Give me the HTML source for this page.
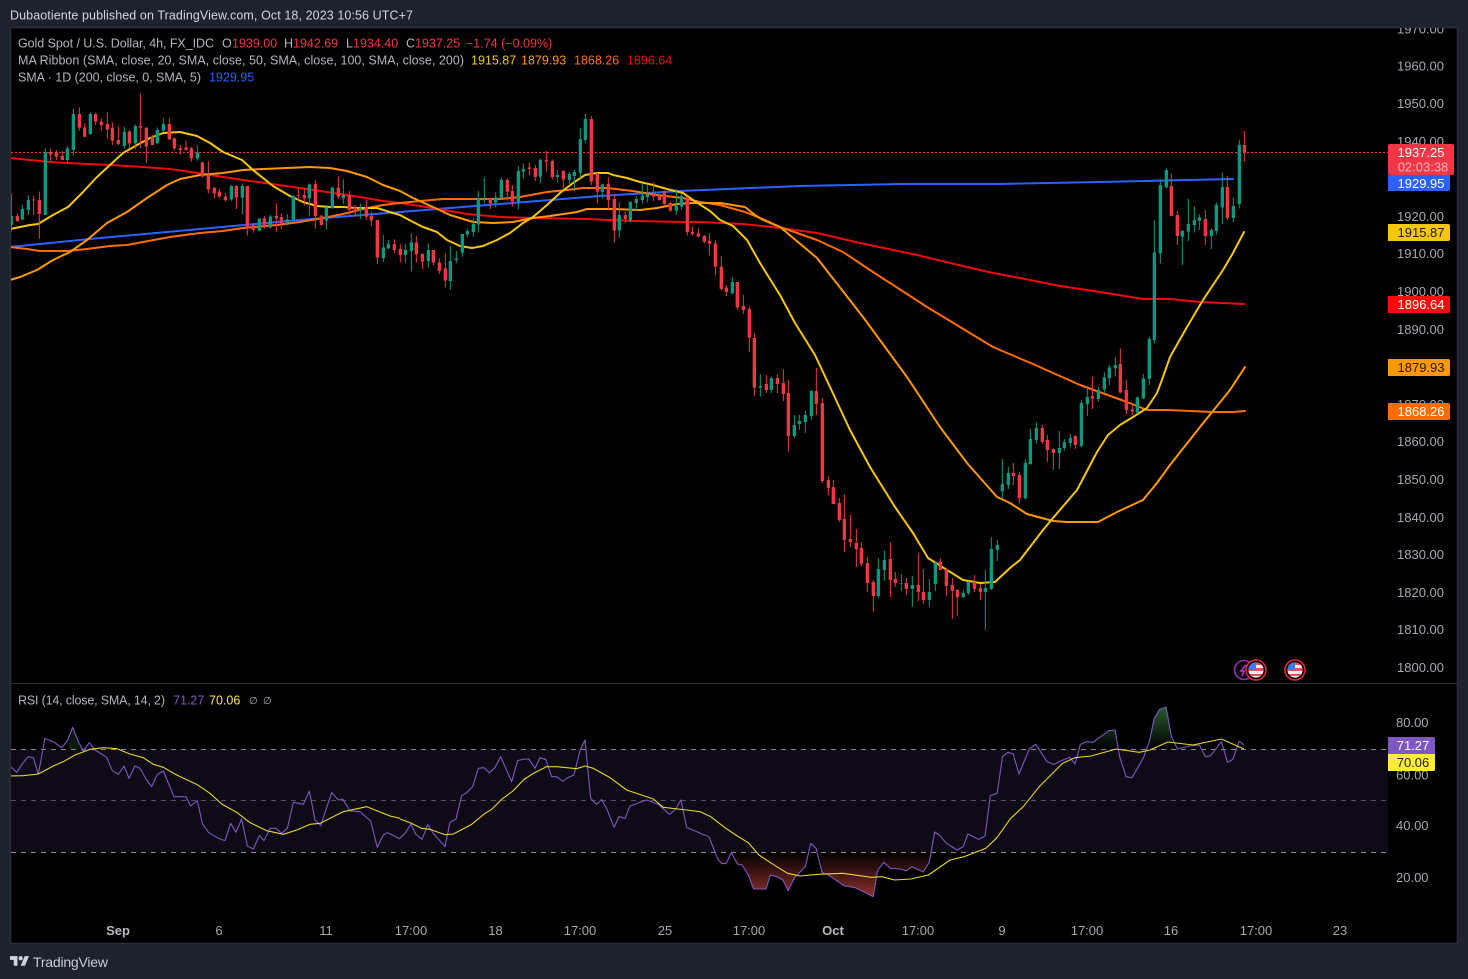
<!DOCTYPE html>
<html><head><meta charset="utf-8"><title>Gold Spot / U.S. Dollar</title>
<style>
html,body{margin:0;padding:0;background:#1e222d;width:1468px;height:979px;overflow:hidden}
svg{display:block;font-family:"Liberation Sans",sans-serif}
path{vector-effect:non-scaling-stroke;fill:none}
.gw{stroke:#089981;stroke-width:1}.gb{stroke:#089981;stroke-width:3.3}
.rw{stroke:#f23645;stroke-width:1}.rb{stroke:#f23645;stroke-width:3.3}
.ma{stroke-width:2;stroke-linejoin:round;stroke-linecap:round}
.ax{font-size:13px;fill:#a6a9b1}
.lg{font-size:12.5px;fill:#b2b5be}
.tag{font-size:13px;text-anchor:middle}
.tm{font-size:13px;fill:#a6a9b1;text-anchor:middle}
</style></head><body>
<svg width="1468" height="979" viewBox="0 0 1468 979" xmlns="http://www.w3.org/2000/svg">
<defs>
<linearGradient id="rg" x1="0" y1="0" x2="0" y2="1"><stop offset="0" stop-color="#8a2e2a" stop-opacity="0"/><stop offset="1" stop-color="#8f302b"/></linearGradient>
<linearGradient id="gg" gradientUnits="userSpaceOnUse" x1="0" y1="148" x2="0" y2="21"><stop offset="0" stop-color="#2a5a30" stop-opacity="0"/><stop offset="1" stop-color="#2a5a30"/></linearGradient>
<clipPath id="c1"><circle cx="1256" cy="670" r="7.6"/></clipPath>
<clipPath id="c2"><circle cx="1295" cy="670" r="7.6"/></clipPath>
<clipPath id="ch"><rect x="11" y="28" width="1445" height="915"/></clipPath>
</defs>
<rect width="1468" height="979" fill="#1e222d"/>
<rect x="10.5" y="27.5" width="1447" height="916" fill="#000" stroke="#2a2e39" stroke-width="1.5"/>
<path d="M11 683.5H1457" style="stroke:#2a2e39;stroke-width:1"/>
<!-- RSI band -->
<rect x="11" y="749" width="1377" height="103" fill="#0e0b16"/>
<path d="M11 749.5H1388M11 852.5H1388" style="stroke:#8b8794;stroke-width:1;stroke-dasharray:5 5"/>
<path d="M11 800.5H1388" style="stroke:#55525d;stroke-width:1;stroke-dasharray:5 5"/>
<!-- last price line -->
<path d="M11 152.5H1388" style="stroke:#ff3344;stroke-width:1;stroke-dasharray:2 2"/>
<g clip-path="url(#ch)">
<!-- MAs -->
<path class="ma" style="stroke:#2962ff" d="M10 247L100 238L200 229L300 220L400 212L500 204L600 196L680 191L800 186L900 184L1000 184L1100 182L1233 179"/>
<path class="ma" style="stroke:#f10a0a" d="M10 158L30 160L50 162L67 163L110 165L143 167L170 169L197 173L243 180L293 187L327 192L360 197L383 201L400 203L433 208L467 214L500 217L533 218L587 219L633 221L683 222L700 222L743 224L780 228L817 233L860 243L917 255L967 267L993 273L1020 278L1060 286L1100 292L1143 299L1170 299L1200 302L1244 304"/>
<path class="ma" style="stroke:#ff6d00" d="M10 247L27 249L40 251L67 251L87 249L110 246L127 245L143 242L170 237L200 233L223 231L243 228L277 225L300 222L323 218L343 214L363 209L383 205L400 203L420 201L443 199L477 199L500 199L520 197L547 192L567 190L583 188L607 188L633 191L657 195L683 198L700 202L720 205L745 212L765 220L780 227L817 240L843 252L873 272L927 307L993 347L1000 350L1033 364L1080 385L1127 402L1147 410L1167 410L1213 412L1233 412L1245 411"/>
<path class="ma" style="stroke:#ff9800" d="M10 280L20 277L37 270L53 260L70 252L87 240L107 223L127 212L147 198L167 185L180 179L200 175L223 173L243 170L263 169L287 168L310 167L330 168L347 171L367 177L383 185L400 191L413 198L433 207L450 215L473 222L493 223L513 222L533 218L550 216L577 212L587 209L613 209L640 210L657 208L677 204L693 203L720 203L745 207L755 215L763 220L780 227L817 258L863 317L907 377L940 427L967 463L997 497L1010 503L1027 514L1053 521L1067 522L1098 522L1117 512L1143 500L1157 483L1170 465L1200 427L1230 390L1245 367"/>
<path class="ma" style="stroke:#f5c60a" d="M10 229L20 227L30 225L38 224L53 215L68 207L83 192L97 177L110 165L123 153L137 145L150 138L163 133L180 132L197 136L210 143L223 152L242 160L253 170L273 186L290 196L303 202L317 206L330 207L343 207L357 208L377 208L393 213L400 215L413 222L423 227L437 232L447 240L460 246L472 248L483 246L497 240L510 233L523 223L533 217L547 205L560 193L573 183L585 175L597 173L608 173L613 175L627 178L640 182L653 185L667 189L683 193L693 200L710 211L720 220L733 226L747 240L760 263L780 295L795 323L815 355L830 387L850 430L870 467L895 507L913 533L928 558L947 570L963 580L980 583L995 582L1010 568L1020 560L1043 530L1053 518L1077 490L1097 452L1108 435L1120 425L1133 417L1147 408L1157 393L1163 377L1170 357L1187 327L1203 300L1223 270L1233 253L1244 232"/>
<!-- candles -->
<g transform="translate(10 90) scale(.33333)">
<path class="gw" d="M4 312V425M37 345V390M55 315V375M106 175V375M172 168V215M190 57V197M241 67V135M343 110V175M376 103V178M442 112V160M460 85V125M562 165V212M664 285V332M697 280V372M748 385V425M781 375V415M832 372V405M850 315V390M898 280V380M949 345V418M967 290V355M1000 268V342M1051 340V387M1120 435V516M1135 450V478"/>
<path class="gb" d="M4 378V405M37 357V389M55 330V360M106 187V375M172 175V210M190 72V180M241 72V132M343 125V168M376 108V160M442 120V160M460 102V122M562 187V205M664 288V328M697 288V323M748 385V422M781 380V412M832 388V398M850 318V390M898 283V325M949 353V392M967 293V355M1000 315V325M1051 355V362M1120 472V505M1135 462V475"/>
<path class="rw" d="M22 370V395M71 318V375M88 305V446M122 175V213M139 180V210M157 183V212M208 52V122M224 100V143M257 68V105M274 85V122M292 67V145M307 97V165M325 110V165M358 120V175M391 10V175M409 112V218M427 135V165M478 85V150M493 143V182M511 165V195M528 152V182M544 170V215M577 215V262M595 213V310M613 292V325M628 297V325M646 308V335M679 285V357M712 288V437M730 403V428M763 378V415M799 340V425M814 370V417M865 297V335M883 295V347M916 270V416M934 375V407M985 260V327M1018 303V375M1036 345V380M1069 330V390M1084 365V408M1102 390V522M1153 448V490"/>
<path class="rb" d="M22 378V393M71 329V331M88 330V372M122 186V194M139 187V200M157 198V210M208 72V113M224 113V140M257 72V95M274 95V105M292 102V118M307 113V152M325 150V162M358 125V160M391 108V113M409 113V170M427 140V165M478 102V148M493 145V175M511 175V180M528 172V180M544 175V205M577 217V260M595 255V298M613 293V310M628 305V320M646 320V330M679 288V323M712 288V412M730 405V420M763 385V412M799 378V385M814 381V400M865 315V317M883 315V325M916 282V378M934 377V405M985 293V320M1018 315V360M1036 352V365M1069 350V380M1084 378V392M1102 390V503M1153 462V480"/>
</g>
<g transform="translate(400 100) scale(.33333)">
<path class="gw" d="M16 432V490M34 400V515M85 430V503M151 438V570M169 453V490M187 402V470M202 385V413M220 355V410M235 273V398M253 232V310M287 277V322M304 232V295M355 198V328M370 190V237M421 175V250M472 210V248M508 215V252M523 210V273M541 85V235M556 42V130M607 250V295M658 306V413M691 303V367M709 288V332M727 250V312M742 253V307M829 267V345M844 280V330"/>
<path class="gb" d="M16 450V465M34 427V453M85 450V483M151 483V543M169 475V480M187 402V458M202 393V404M220 372V396M235 295V373M253 295V297M287 292V308M304 240V295M355 213V305M370 207V215M421 180V230M472 225V231M508 222V240M523 216V228M541 117V218M556 57V120M607 253V276M658 345V392M691 306V362M709 297V309M727 287V300M742 282V291M829 317V332M844 288V320"/>
<path class="rw" d="M1 432V487M49 408V488M67 460V507M100 450V495M118 475V522M136 460V563M271 295V327M322 235V302M337 255V320M388 187V227M406 195V243M439 153V215M457 178V238M490 210V267M574 48V255M592 218V310M625 232V332M643 282V428M676 335V368M760 247V303M778 280V302M793 272V315M811 305V335M862 290V407M877 380V407M895 385V412M913 405V430M928 400V467M946 420V527"/>
<path class="rb" d="M1 447V465M49 427V463M67 462V485M100 450V488M118 487V513M136 505V542M271 295V310M322 240V275M337 273V305M388 202V207M406 204V231M439 180V185M457 183V231M490 213V238M574 57V245M592 220V275M625 252V300M643 297V392M676 345V357M760 282V290M778 288V300M793 273V312M811 309V332M862 292V396M877 396V402M895 400V410M913 408V425M928 423V431M946 430V500"/>
</g>
<g transform="translate(700 220) scale(.33333)">
<path class="gw" d="M97 171V222M181 462V530M214 470V519M283 585V654M298 585V630M316 573V639M334 510V600M535 1014V1134M553 990V1083M604 1062V1113M637 1068V1161M688 1077V1161M706 1023V1113M790 1110V1134M805 1083V1125M856 1050V1230M874 951V1110M892 960V1023M907 717V835M925 741V807"/>
<path class="gb" d="M97 186V220M181 498V503M214 474V510M283 615V648M298 603V612M316 585V606M334 513V588M535 1047V1128M553 1020V1050M604 1089V1091M637 1095V1107M688 1116V1140M706 1029V1092M790 1119V1131M805 1086V1119M856 1104V1116M874 987V1107M892 975V990M907 792V814M925 759V795"/>
<path class="rw" d="M64 108V212M79 195V228M112 186V270M130 225V282M148 260V396M163 340V528M199 465V519M232 462V519M250 447V543M265 480V696M349 444V585M367 534V789M385 768V825M400 780V852M418 834V906M433 822V996M451 885V981M469 927V1041M484 966V1038M502 1011V1116M520 1080V1176M571 966V1131M586 1056V1101M619 1074V1125M655 999V1143M670 1047V1152M721 1014V1050M739 1044V1128M757 1074V1197M772 1107V1188M823 1065V1116M841 1092V1140M940 729V795M958 756V850"/>
<path class="rb" d="M64 140V207M79 203V216M112 186V262M130 258V270M148 267V353M163 354V503M199 492V510M232 474V492M250 489V522M265 519V648M349 513V552M367 549V783M385 780V804M400 801V852M418 849V900M433 897V960M451 957V966M469 969V987M484 984V1032M502 1029V1089M520 1086V1128M571 1017V1080M586 1077V1089M619 1089V1107M655 1095V1116M670 1116V1140M721 1026V1050M739 1047V1098M757 1095V1113M772 1110V1131M823 1086V1107M841 1104V1116M940 759V768M958 765V835"/>
</g>
<g transform="translate(1000 330) scale(.33333)">
<path class="gw" d="M76 388V508M91 297V405M109 276V340M178 303V417M193 327V363M211 312V350M244 210V352M262 168V258M295 171V216"/>
<path class="gb" d="M76 399V505M91 327V402M109 294V330M178 354V369M193 336V354M211 324V339M244 219V348M262 201V222M295 180V207"/>
<path class="rw" d="M127 285V342M142 315V396M160 355V420M226 315V357M277 141V237"/>
<path class="rb" d="M127 294V336M142 330V360M160 357V369M226 318V345M277 198V206"/>
</g>
<g transform="translate(1100 120) scale(.33333)">
<path class="gw" d="M13 757V820M28 735V795M46 712V770M112 830V880M130 762V838M148 650V795M163 300V670M181 178V430M199 145V205M247 330V435M265 237V363M283 258V338M298 283V330M334 325V387M349 247V345M367 158V312M400 232V308M418 60V265"/>
<path class="gb" d="M13 772V808M28 742V775M46 735V745M112 832V878M130 775V835M148 657V777M163 397V660M181 195V400M199 150V202M247 333V350M265 312V335M283 300V315M298 292V303M334 330V348M349 255V333M367 201V262M400 258V294M418 75V252"/>
<path class="rw" d="M61 685V820M79 780V883M97 855V885M214 162V288M232 273V375M316 270V375M382 168V300M433 33V126"/>
<path class="rb" d="M61 732V817M79 810V870M97 868V875M214 198V288M232 285V348M316 297V348M382 201V294M433 75V98"/>
</g>
<!-- RSI fills -->
<polygon points="68,749 73,727 79,742 83,749" fill="#0a1a0e"/>
<polygon points="580,749 585,740 586,749" fill="#0a1a0e"/>
<g transform="translate(700 700) scale(.35714 .33333)">
<polygon fill="url(#rg)" points="45,457 50,478 60,490 73,491 88,458 105,492 118,495 135,525 150,567 185,567 197,525 215,530 232,540 247,572 265,532 295,500 303,457 335,457 342,518 360,525 405,558 435,563 485,590 497,512 515,487 533,505 560,507 578,512 593,500 625,516 642,487 648,457"/>
<polygon fill="url(#gg)" points="1063,148 1065,133 1083,125 1100,127 1145,92 1162,90 1168,148"/>
<polygon fill="url(#gg)" points="1255,148 1258,125 1272,55 1287,28 1305,21 1320,110 1325,148"/>
</g>
<!-- RSI lines -->
<g transform="translate(0 680) scale(.33333)">
<path style="stroke:#7e57c2;stroke-width:1.1;stroke-linejoin:round" d="M30 258L50 277L68 250L85 230L100 233L115 283L135 175L165 188L185 203L202 183L218 142L235 185L250 213L268 188L285 210L320 232L337 272L355 283L372 258L387 295L405 258L420 265L440 300L455 320L472 283L490 273L522 350L558 350L572 378L592 362L607 430L625 457L655 475L675 482L692 430L708 457L725 417L742 498L760 507L778 467L792 482L810 445L828 445L845 460L862 445L880 367L910 373L928 333L945 420L962 437L995 338L1015 360L1028 357L1050 393L1080 395L1112 423L1132 502L1140 485"/>
<path style="stroke:#e8d52e;stroke-width:1.1;stroke-linejoin:round" d="M30 288L70 287L115 282L160 258L190 245L225 225L270 208L310 203L350 206L390 222L430 233L460 253L490 262L530 285L590 313L630 340L665 372L710 397L750 428L800 452L850 463L890 450L930 433L960 430L1030 395L1100 380L1170 408L1200 415"/>
</g>
<g transform="translate(380 720) scale(.33333)">
<path style="stroke:#7e57c2;stroke-width:1.1;stroke-linejoin:round" d="M0 365L10 345L22 338L40 347L58 356L75 340L93 312L107 342L126 358L143 314L160 340L195 380L210 307L228 297L245 227L260 218L278 200L295 145L312 143L328 158L345 143L362 110L395 185L413 122L428 118L447 117L465 145L480 113L497 118L515 170L530 170L548 184L565 172L582 165L600 92L615 60L632 235L650 253L665 238L682 270L702 322L717 290L735 295L750 258L800 240L835 253L868 283L885 270L903 240L920 323L950 335L960 339"/>
<path style="stroke:#e8d52e;stroke-width:1.1;stroke-linejoin:round" d="M60 297L90 308L125 325L150 328L195 344L220 342L275 313L315 280L335 268L365 238L400 212L430 180L460 160L500 140L530 140L590 146L615 138L640 145L690 173L740 210L790 227L820 237L850 262L920 270L960 275"/>
</g>
<g transform="translate(700 700) scale(.35714 .33333)">
<path style="stroke:#7e57c2;stroke-width:1.1;stroke-linejoin:round" d="M0 400L25 410L50 478L60 490L73 491L88 458L105 492L118 495L135 525L150 567L185 567L197 525L215 530L232 540L247 572L265 532L295 500L310 430L325 445L342 518L360 525L405 558L435 563L485 590L497 512L515 487L533 505L560 507L578 512L593 500L625 516L642 487L657 396L670 405L690 430L720 450L737 440L750 402L780 418L798 408L813 287L832 280L847 170L862 157L877 162L893 222L922 147L940 133L972 185L990 193L1020 178L1035 172L1050 192L1065 133L1083 125L1100 127L1145 92L1162 90L1175 170L1193 230L1210 233L1243 170L1258 125L1272 55L1287 28L1305 21L1320 110L1337 147L1370 138L1398 135L1415 170L1430 167L1460 125L1477 187L1492 178L1510 123L1523 135"/>
<path style="stroke:#e8d52e;stroke-width:1.1;stroke-linejoin:round" d="M0 335L30 350L70 383L100 405L135 428L165 465L200 490L245 520L280 528L330 523L400 520L480 532L510 530L545 540L590 537L640 525L700 480L740 470L800 445L830 415L870 355L905 320L950 260L1015 190L1050 173L1095 168L1165 147L1230 157L1260 150L1310 126L1380 135L1460 117L1523 147"/>
</g>
</g>
<!-- event icons -->
<circle cx="1244" cy="670" r="9.5" fill="#0c0812" stroke="#9c27b0" stroke-width="1.6"/>
<path d="M1246 665L1241 671H1244L1242 676" style="stroke:#c22fd6;stroke-width:1.5"/>
<g>
<circle cx="1256" cy="670" r="10" fill="#000" stroke="#e6263f" stroke-width="1.5"/>
<g clip-path="url(#c1)"><rect x="1248" y="662" width="16" height="16" fill="#f0f0f0"/><rect x="1248" y="662" width="16" height="3" fill="#e8505b"/><rect x="1248" y="668" width="16" height="3" fill="#e8505b"/><rect x="1248" y="674" width="16" height="2" fill="#e8505b"/><rect x="1248" y="662" width="8" height="8" fill="#2f80e4"/></g>
<circle cx="1295" cy="670" r="10" fill="#000" stroke="#e6263f" stroke-width="1.5"/>
<g clip-path="url(#c2)"><rect x="1287" y="662" width="16" height="16" fill="#f0f0f0"/><rect x="1287" y="662" width="16" height="3" fill="#e8505b"/><rect x="1287" y="668" width="16" height="3" fill="#e8505b"/><rect x="1287" y="674" width="16" height="2" fill="#e8505b"/><rect x="1287" y="662" width="8" height="8" fill="#2f80e4"/></g>
</g>
<!-- header -->
<text x="10" y="19.5" font-size="12.5" fill="#d1d4dc" textLength="403" lengthAdjust="spacing">Dubaotiente published on TradingView.com, Oct 18, 2023 10:56 UTC+7</text>
<!-- legend -->
<text class="lg" x="18" y="47.5" textLength="196" lengthAdjust="spacing">Gold Spot / U.S. Dollar, 4h, FX_IDC</text>
<g class="lg"><text class="lg" x="222" y="47.5">O</text><text class="lg" x="284" y="47.5">H</text><text class="lg" x="346" y="47.5">L</text><text class="lg" x="406" y="47.5">C</text></g>
<g font-size="12.5" fill="#f23645"><text x="232" y="47.5">1939.00</text><text x="293" y="47.5">1942.69</text><text x="353" y="47.5">1934.40</text><text x="415" y="47.5">1937.25</text><text x="466" y="47.5">−1.74 (−0.09%)</text></g>
<text class="lg" x="18" y="64.5" textLength="446" lengthAdjust="spacing">MA Ribbon (SMA, close, 20, SMA, close, 50, SMA, close, 100, SMA, close, 200)</text>
<g font-size="12.5"><text x="471" y="64.5" fill="#f5c60a">1915.87</text><text x="521" y="64.5" fill="#ff9800">1879.93</text><text x="574" y="64.5" fill="#ff6d00">1868.26</text><text x="627" y="64.5" fill="#f10a0a">1896.64</text></g>
<text class="lg" x="18" y="81.5" textLength="183" lengthAdjust="spacing">SMA · 1D (200, close, 0, SMA, 5)</text>
<text x="209" y="81.5" font-size="12.5" fill="#2962ff">1929.95</text>
<text class="lg" x="18" y="704.5" textLength="147" lengthAdjust="spacing">RSI (14, close, SMA, 14, 2)</text>
<text x="173" y="704.5" font-size="12.5" fill="#7e57c2">71.27</text>
<text x="209" y="704.5" font-size="12.5" fill="#ffeb3b">70.06</text>
<text x="249" y="704" font-size="10" fill="#b2b5be">∅</text><text x="263" y="704" font-size="10" fill="#b2b5be">∅</text>
<!-- price axis -->
<g class="ax" clip-path="url(#ch)">
<text x="1397" y="33.5">1970.00</text><text x="1397" y="70.5">1960.00</text><text x="1397" y="108">1950.00</text><text x="1397" y="146">1940.00</text><text x="1397" y="221">1920.00</text><text x="1397" y="258">1910.00</text><text x="1397" y="296">1900.00</text><text x="1397" y="334">1890.00</text><text x="1397" y="409">1870.00</text><text x="1397" y="446">1860.00</text><text x="1397" y="484">1850.00</text><text x="1397" y="522">1840.00</text><text x="1397" y="559">1830.00</text><text x="1397" y="597">1820.00</text><text x="1397" y="634">1810.00</text><text x="1397" y="672">1800.00</text>
<text x="1396" y="727">80.00</text><text x="1396" y="779.5">60.00</text><text x="1396" y="830">40.00</text><text x="1396" y="882">20.00</text>
</g>
<!-- tags -->
<rect x="1388" y="144" width="66" height="31" rx="2" fill="#f23645"/>
<path d="M1388 175H1450V189Q1450 191 1448 191H1388Z" style="fill:#2962ff"/>
<path d="M1388 224H1448Q1450 224 1450 226V239Q1450 241 1448 241H1388Z" style="fill:#f5c60a"/>
<path d="M1388 296H1448Q1450 296 1450 298V311Q1450 313 1448 313H1388Z" style="fill:#ff0a0a"/>
<path d="M1388 359H1448Q1450 359 1450 361V374Q1450 376 1448 376H1388Z" style="fill:#ff9800"/>
<path d="M1388 403H1448Q1450 403 1450 405V418Q1450 420 1448 420H1388Z" style="fill:#ff6d00"/>
<path d="M1388 737H1433Q1435 737 1435 739V754H1388Z" style="fill:#7e57c2"/>
<path d="M1388 754H1435V769Q1435 771 1433 771H1388Z" style="fill:#ffeb3b"/>
<g class="tag">
<text class="tag" x="1421" y="157" fill="#fff">1937.25</text>
<text class="tag" x="1423" y="171.5" fill="#f9b4bb">02:03:38</text>
<text class="tag" x="1421" y="188" fill="#fff">1929.95</text>
<text class="tag" x="1421" y="237" fill="#1c1c1c">1915.87</text>
<text class="tag" x="1421" y="309" fill="#fff">1896.64</text>
<text class="tag" x="1421" y="372" fill="#1c1c1c">1879.93</text>
<text class="tag" x="1421" y="416" fill="#fff">1868.26</text>
<text class="tag" x="1413" y="750" fill="#fff">71.27</text>
<text class="tag" x="1413" y="767" fill="#1c1c1c">70.06</text>
</g>
<!-- time axis -->
<g class="tm">
<text class="tm" x="118" y="935" font-weight="bold" style="fill:#b7bac2">Sep</text>
<text class="tm" x="219" y="935">6</text><text class="tm" x="326" y="935">11</text><text class="tm" x="411" y="935">17:00</text><text class="tm" x="495.5" y="935">18</text><text class="tm" x="580" y="935">17:00</text><text class="tm" x="665" y="935">25</text><text class="tm" x="749" y="935">17:00</text>
<text class="tm" x="833" y="935" font-weight="bold" style="fill:#b7bac2">Oct</text>
<text class="tm" x="918" y="935">17:00</text><text class="tm" x="1002" y="935">9</text><text class="tm" x="1087" y="935">17:00</text><text class="tm" x="1171" y="935">16</text><text class="tm" x="1256" y="935">17:00</text><text class="tm" x="1340" y="935">23</text>
</g>
<!-- footer logo -->
<g transform="translate(10 954) scale(.535)" fill="#d1d4dc"><polygon points="14,22 7,22 7,11 0,11 0,4 14,4"/><polygon points="28,22 20,22 27.5,4 35.5,4"/><circle cx="20" cy="8" r="4"/></g>
<text x="33" y="967" font-size="14" fill="#c9ccd4" textLength="75" lengthAdjust="spacing">TradingView</text>
</svg>
</body></html>
